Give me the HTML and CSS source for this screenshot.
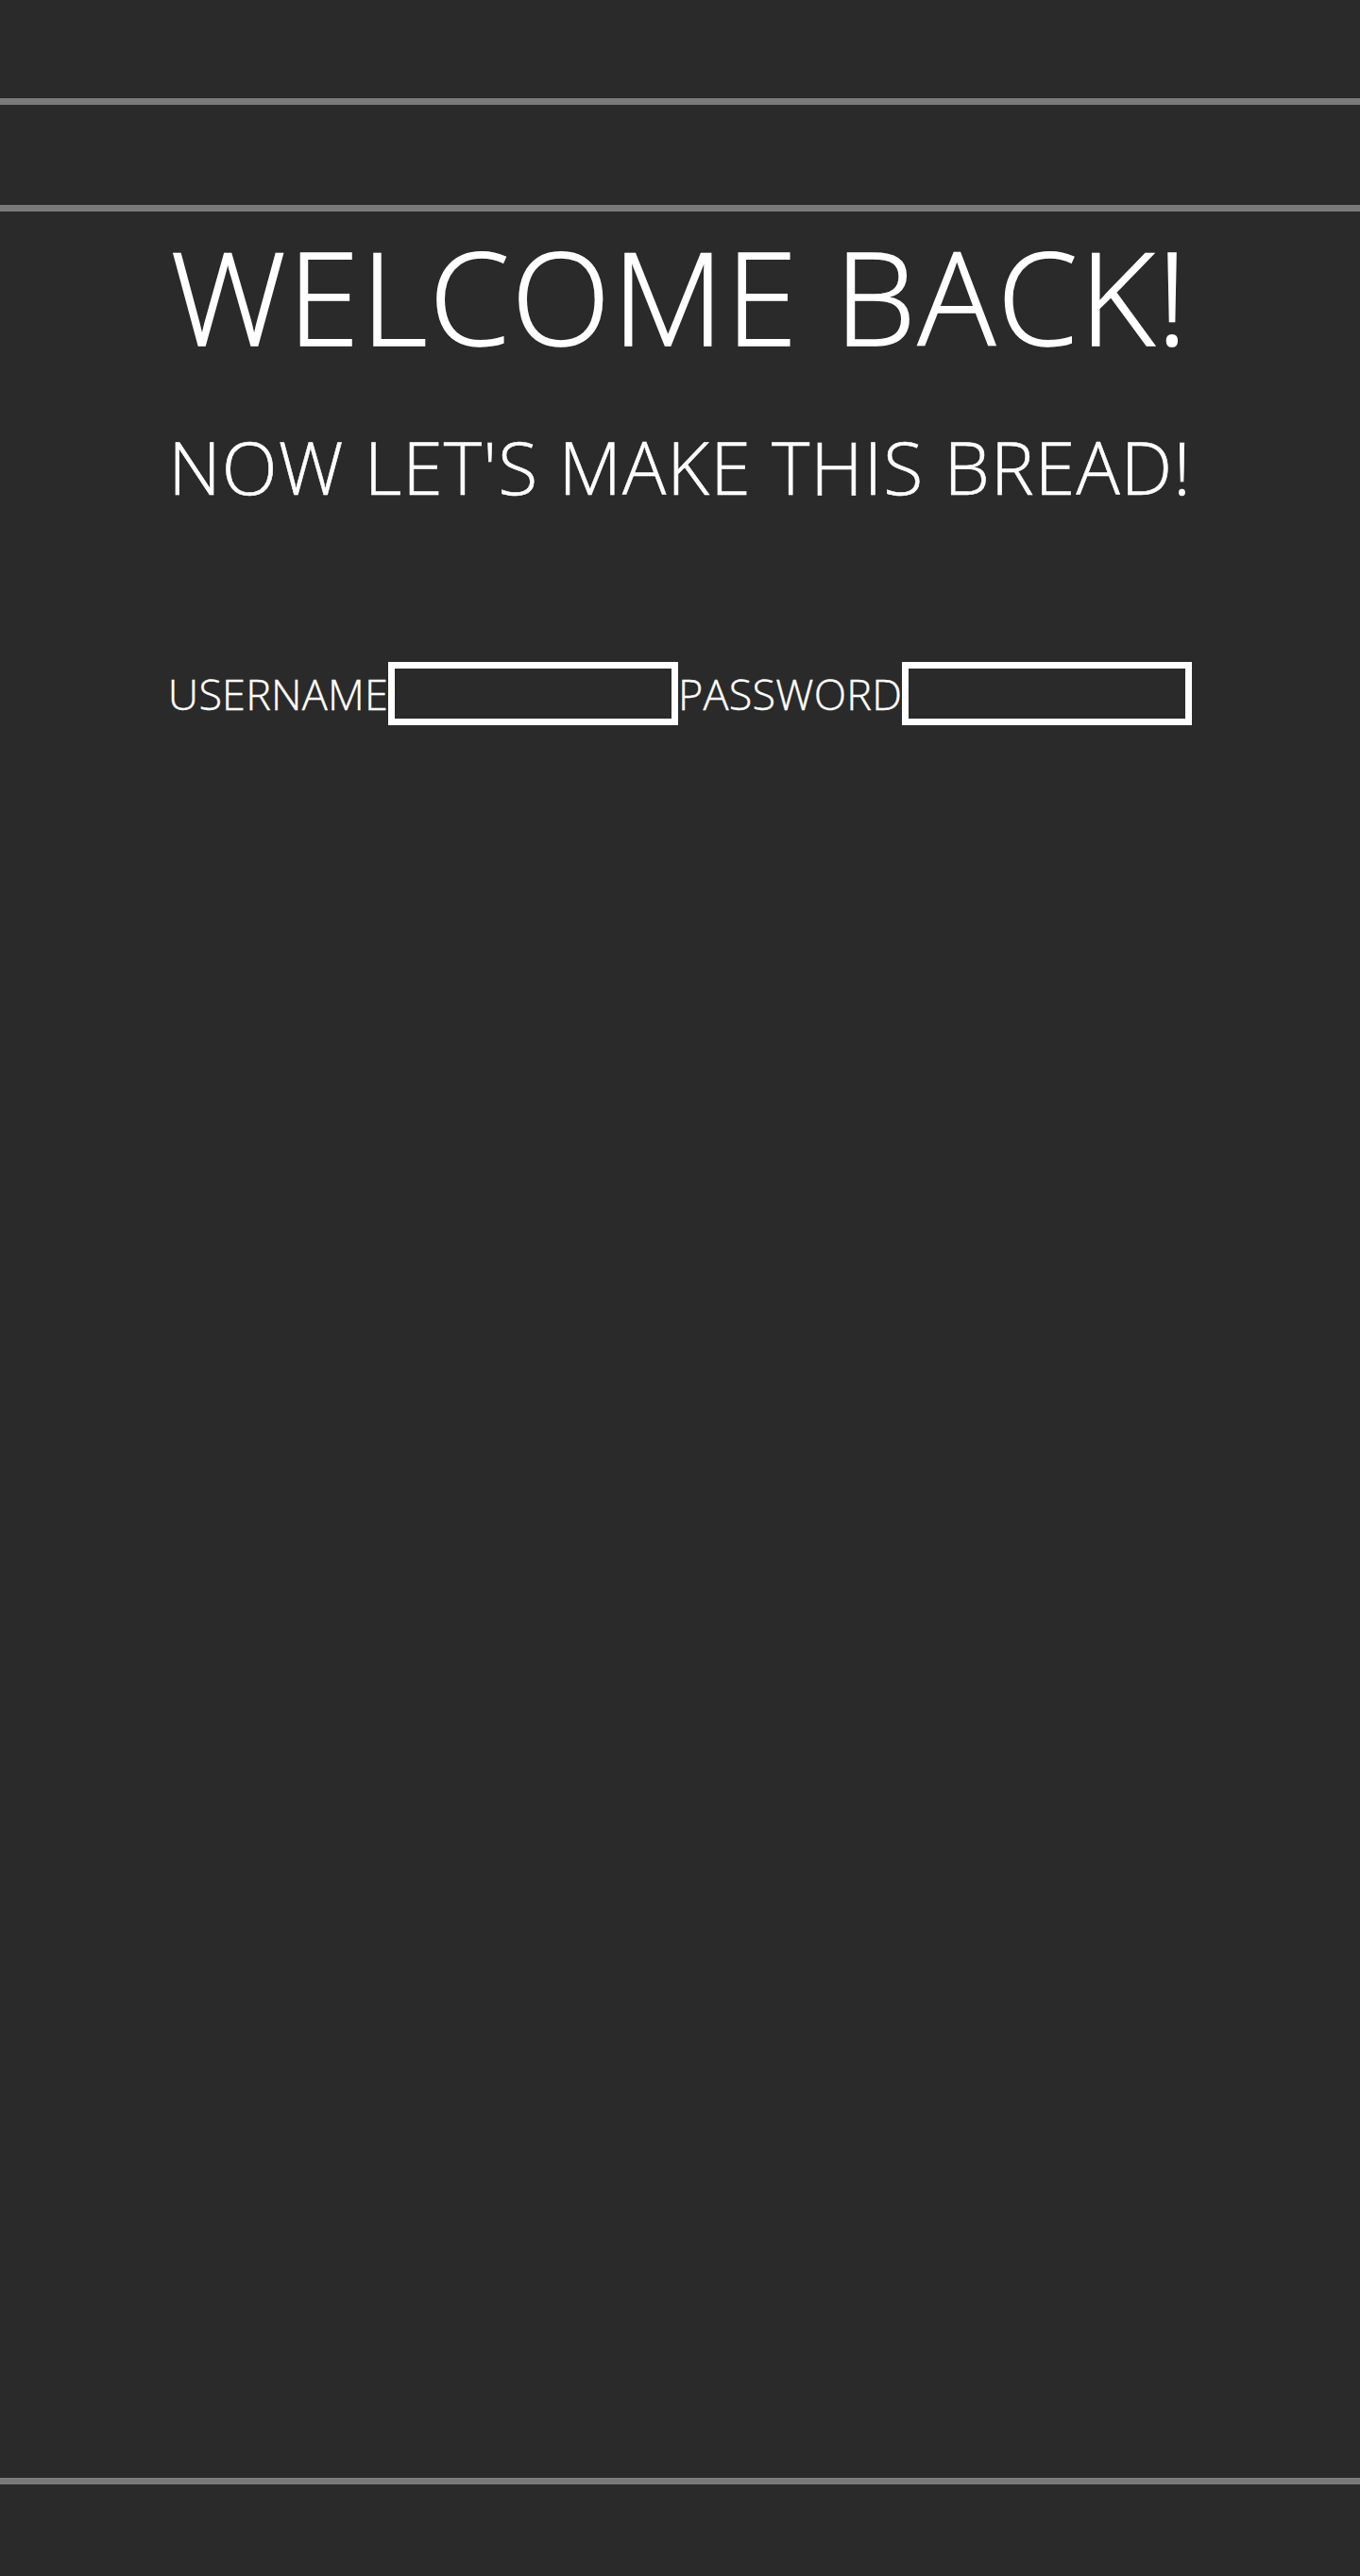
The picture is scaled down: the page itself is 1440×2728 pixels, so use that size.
FILE: index.html
```html
<!DOCTYPE html>
<html lang="en">
<head>
<meta charset="utf-8">
<title>Welcome back</title>
<link rel="stylesheet" href="styles.css">
</head>
<body>
<div class="page">
  <header class="site-header">
    <div class="header-top"></div>
    <nav class="header-nav"></nav>
  </header>
  <main class="content">
    <h1 class="title">WELCOME BACK!</h1>
    <h2 class="subtitle">NOW LET'S MAKE THIS BREAD!</h2>
    <form class="login">
      <label class="field-label" for="username">USERNAME</label>
      <input class="field-input" id="username" type="text">
      <label class="field-label" for="password">PASSWORD</label>
      <input class="field-input" id="password" type="password">
    </form>
  </main>
  <footer class="site-footer"></footer>
</div>
</body>
</html>
```

FILE: styles.css
```css
html, body {
  margin: 0;
  padding: 0;
  background: #2a2a2a;
}
body {
  font-family: "Open Sans", "Liberation Sans", sans-serif;
  font-weight: 300;
  color: #ffffff;
}
.page {
  min-height: 2728px;
  display: flex;
  flex-direction: column;
}
.header-top {
  height: 104px;
  border-bottom: 7px solid #7a7a7a;
}
.header-nav {
  height: 106px;
  border-bottom: 7px solid #7a7a7a;
}
.content {
  flex: 1;
  display: flex;
  flex-direction: column;
  align-items: center;
}
.title {
  margin: 21px 0 0;
  font-size: 137px;
  line-height: 137px;
  font-weight: 300;
  letter-spacing: 2px;
  -webkit-text-stroke: 1.5px #ffffff;
}
.subtitle {
  margin: 74px 0 0;
  font-size: 77px;
  line-height: 77px;
  font-weight: 300;
  letter-spacing: 1.1px;
  -webkit-text-stroke: 0.6px #ffffff;
}
.login {
  margin-top: 168px;
  display: flex;
  align-items: center;
}
.field-label {
  font-size: 45px;
  line-height: 45px;
  letter-spacing: 0.2px;
  -webkit-text-stroke: 0.4px #ffffff;
}
.field-input {
  box-sizing: border-box;
  width: 307px;
  height: 67px;
  border: 7px solid #ffffff;
  background: transparent;
  color: #ffffff;
  margin: 0;
  padding: 0 10px;
  font: inherit;
  font-size: 32px;
  outline: none;
}
.site-footer {
  height: 97px;
  border-top: 7px solid #7a7a7a;
}
```
